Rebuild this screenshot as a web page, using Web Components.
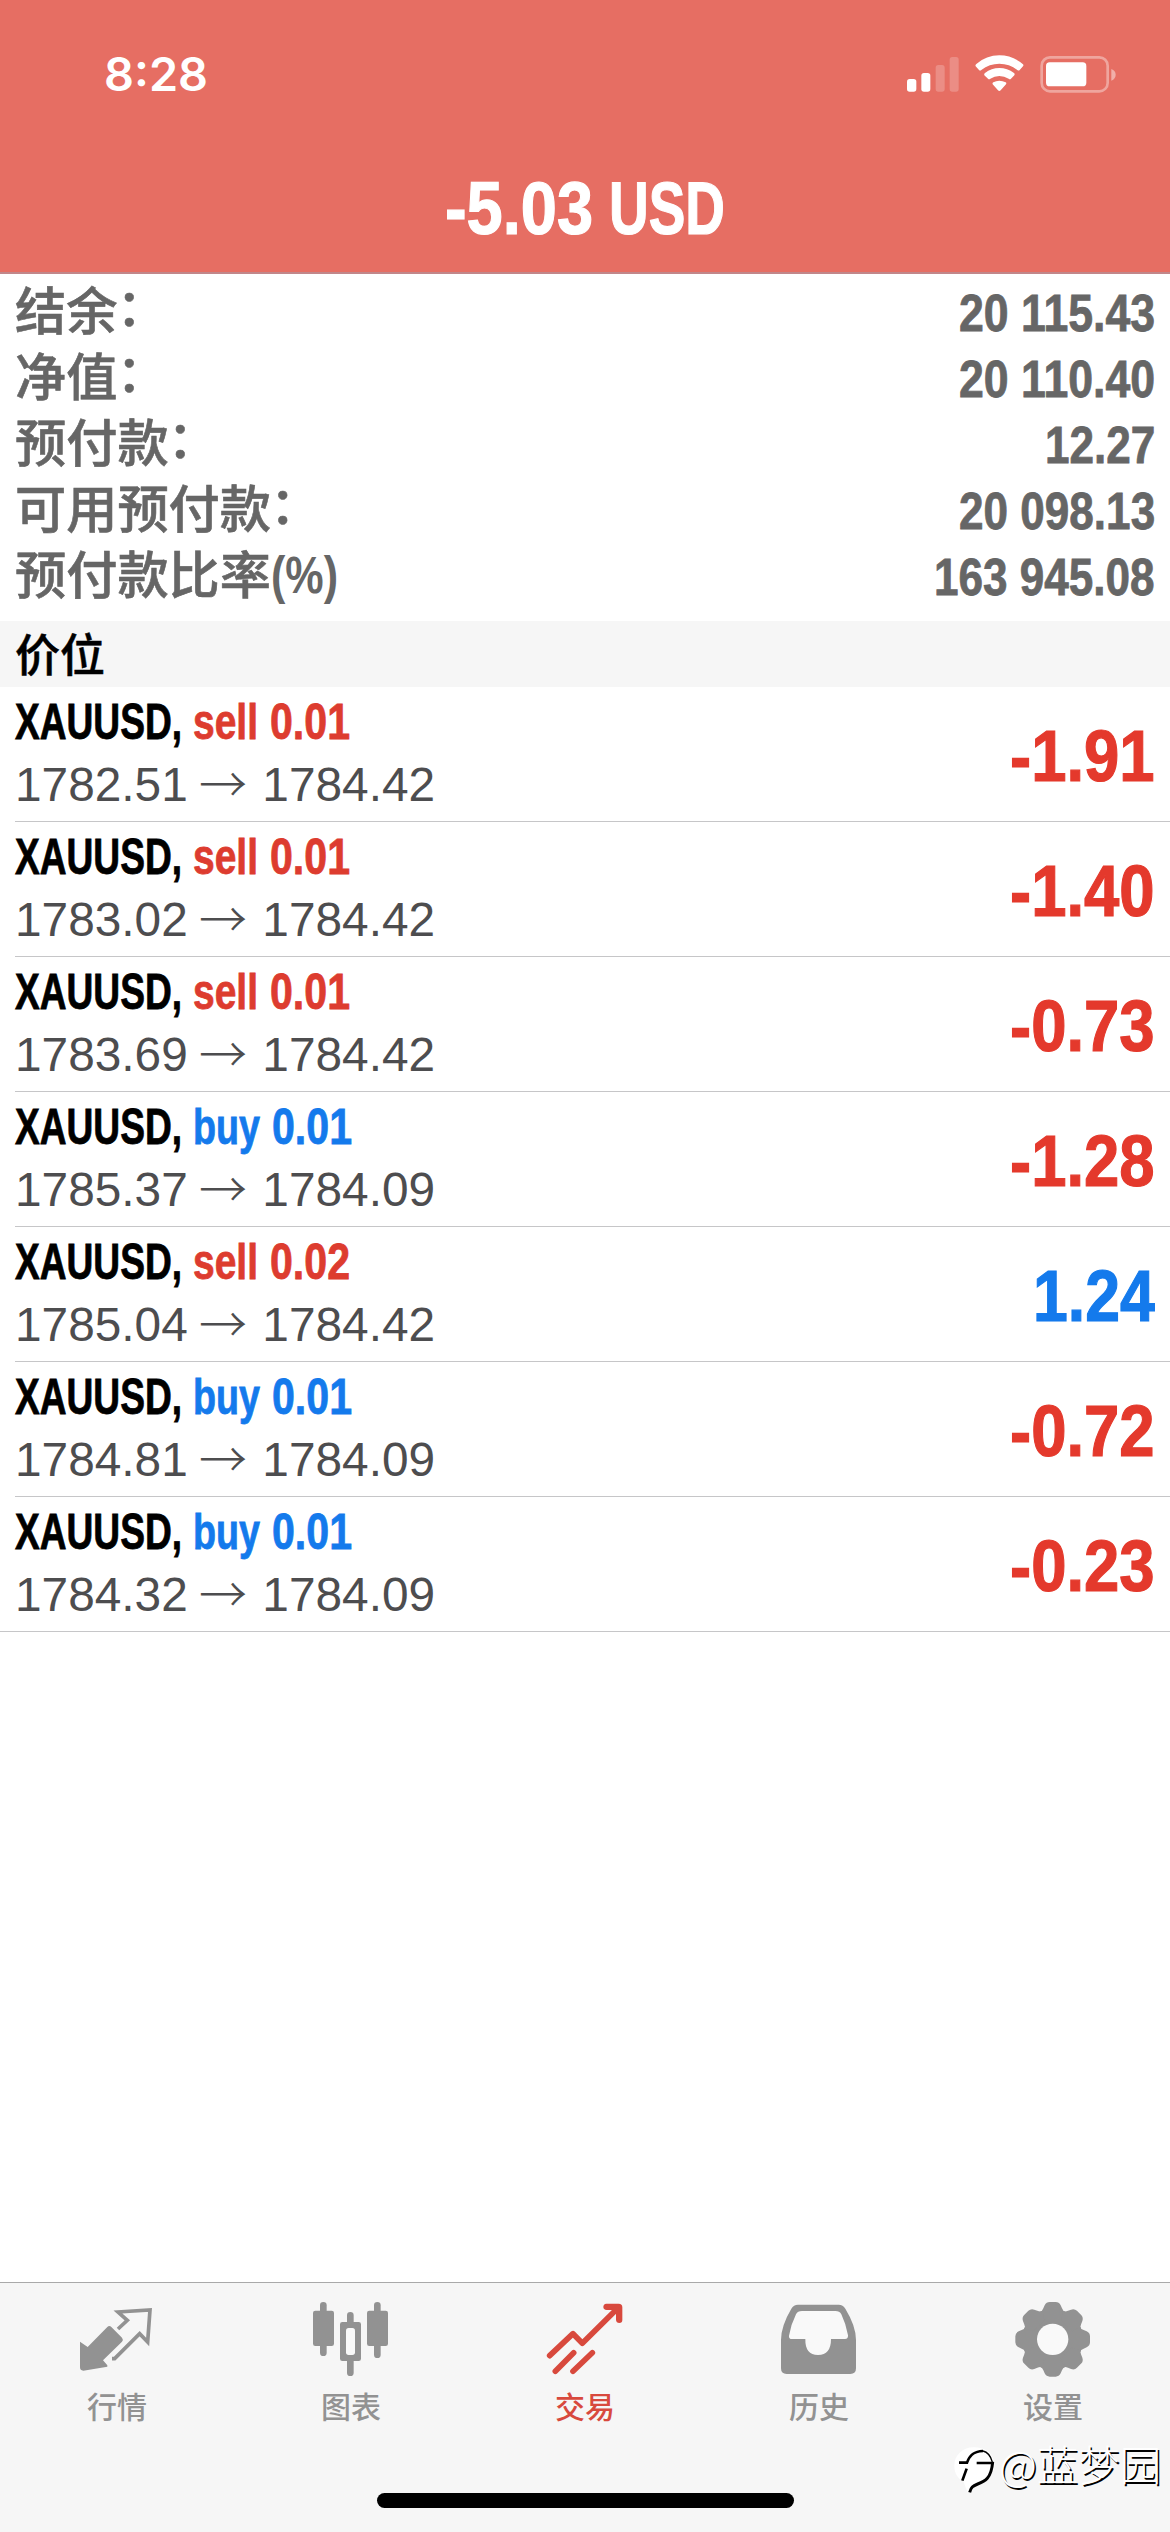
<!DOCTYPE html>
<html lang="zh-CN">
<head>
<meta charset="utf-8">
<meta name="viewport" content="width=device-width">
<title>交易</title>
<style>
html,body{margin:0;padding:0;background:#fff}
body{font-family:"Liberation Sans","Noto Sans CJK SC",sans-serif}
</style>
</head>
<body>
<trade-app></trade-app>
<script>
class Base extends HTMLElement{
  constructor(){super();this.attachShadow({mode:'open'})}
  connectedCallback(){this.shadowRoot.innerHTML=this.render();if(this.ready)this.ready()}
  a(n){return this.getAttribute(n)||''}
}

customElements.define('fit-text',class extends Base{
  render(){return `<style>:host{display:block;flex:none;white-space:pre;width:${this.a('w')}px}
    span{display:inline-block;transform-origin:0 50%}</style><span>${this.a('text')}</span>`}
  ready(){const s=this.shadowRoot.querySelector('span');
    s.style.transform=`scaleX(${+this.a('w')/s.getBoundingClientRect().width})`}
});

/* Advance width of a figure string: digits, and half-width marks. */
const figW=(t,d)=>[...t].reduce((n,c)=>n+(/\d/.test(c)?d:c==='-'?d*.66:d*.52),0);

customElements.define('status-bar',class extends Base{
  render(){return `<style>
    :host{display:flex;justify-content:space-between;align-items:center;height:50px;padding:48px 53px 0 104px;color:#fff}
    div{font:600 46px/50px Inter,sans-serif;padding-top:1px}
    svg{display:block;width:212px;height:40px}
  </style>
  <div><fit-text w="104" text="8:28"></fit-text></div>
  <svg viewBox="134 98 636 120">
    <g fill="#fff"><rect x="140" y="176" width="28" height="38" rx="8"/><rect x="183" y="158" width="27" height="56" rx="8"/>
    <rect x="226" y="134" width="27" height="80" rx="8" opacity=".22"/><rect x="268" y="110" width="27" height="104" rx="8" opacity=".22"/>
    <path d="M346 138Q344 134 348 131Q378 105 417 105Q456 105 487 131Q491 134 488 138L478 149Q475 152 471 149Q447 130 417 130Q387 130 363 149Q359 152 356 149Z"/>
    <path d="M372 165Q370 161 374 158Q393 143 417 143Q441 143 461 158Q465 161 462 165L452 175Q449 178 445 175Q432 167 417 167Q402 167 390 175Q386 178 383 175Z"/>
    <path d="M397 192Q395 188 399 186Q407 181 417 181Q427 181 436 186Q440 188 437 192L421 210Q417 214 413 210Z"/>
    <rect x="557" y="126" width="121" height="72" rx="11"/>
    <path d="M753 146Q766 151 766 163T753 181Z" opacity=".45"/></g>
    <rect x="544" y="111" width="198" height="102" rx="25" fill="none" stroke="#fff" stroke-opacity=".38" stroke-width="8"/>
  </svg>`}
});

customElements.define('nav-header',class extends Base{
  render(){return `<style>
    :host{display:flex;flex-direction:column;height:272px;background:#e66e63;border-bottom:2px solid #c1878a}
    .t{display:flex;justify-content:center;gap:16px;padding-top:69px;color:#fff;font:700 74px/84px "Liberation Sans",sans-serif;-webkit-text-stroke:1.2px #fff}
  </style><status-bar></status-bar>
  <div class="t"><fit-text w="148" text="-5.03"></fit-text><fit-text w="116" text="USD"></fit-text></div>`}
});

customElements.define('account-row',class extends Base{
  render(){const v=this.a('value');return `<style>
    :host{display:flex;justify-content:space-between;height:66px;padding:0 15px;color:#666}
    .l{display:flex;font:500 51.2px/68px "Liberation Sans","Noto Sans CJK SC",sans-serif;-webkit-text-stroke:.6px #666}
    .l i{font-style:normal;margin:-4px 0 0 -1px}
    .l fit-text{font-weight:700;margin-top:-1px;-webkit-text-stroke:0}
    .v{font:700 51px/69px "Liberation Sans",sans-serif;-webkit-text-stroke:.8px #666}
  </style><div class="l"><span>${this.a('label')}</span>${this.a('unit')?`<fit-text w="67" text="${this.a('unit')}"></fit-text>`:'<i>：</i>'}</div>
  <div class="v"><fit-text w="${figW(v,24.4)}" text="${v}"></fit-text></div>`}
});

customElements.define('section-title',class extends Base{
  render(){return `<style>:host{display:block;height:66px;padding-left:15px;background:#f6f6f6;color:#000;
    font:500 45px/63px "Noto Sans CJK SC",sans-serif;-webkit-text-stroke:.5px #000}</style><slot></slot>`}
});

customElements.define('position-row',class extends Base{
  render(){const s=this.a('side'),p=this.a('profit'),c=s==='buy'?'#147aec':'#dd3c2f',pc=p[0]==='-'?'#e4392c':'#147aec';
  return `<style>
    :host{display:flex;align-items:center;height:134px;margin-left:15px;padding-right:15px;border-bottom:1px solid #c6c6c8}
    :host([last]){margin-left:0;padding-left:15px}
    .m{flex:1;align-self:flex-start;padding-top:7px}
    .n{display:flex;font:700 50px/56px "Liberation Sans",sans-serif;color:#000;-webkit-text-stroke:.8px currentColor}
    .s{display:flex;gap:12px;margin-left:11px;color:${c}}
    .p{display:flex;font:400 47.8px/56px "Liberation Sans",sans-serif;color:#4d4d4f;padding-top:7px;white-space:pre}
    .p i{font:300 48px/48px "Noto Sans CJK SC",sans-serif;width:50px;margin-left:-2px}
    .v{font:700 73px/80px "Liberation Sans",sans-serif;color:${pc};padding-top:3px;-webkit-text-stroke:1.2px currentColor}
  </style>
  <div class="m"><div class="n"><fit-text w="167" text="XAUUSD,"></fit-text>
    <div class="s"><fit-text w="${s==='buy'?67:65}" text="${s}"></fit-text><fit-text w="80" text="${this.a('lots')}"></fit-text></div></div>
    <div class="p"><span>${this.a('open')} </span><i>→</i><span> ${this.a('now')}</span></div></div>
  <div class="v"><fit-text w="${figW(p,34.6)}" text="${p}"></fit-text></div>`}
});

const ICONS={
quotes:`<svg viewBox="231 120 240 240"><path fill="currentColor" d="M240 245L263 261L322 201Q328 195 334 201L366 233Q371 239 366 245L309 301L322 316V320L250 332Q240 332 240 322Z"/>
  <path fill="none" stroke="currentColor" stroke-width="11" d="M354 207L382 181L354 156L450 150L443 246L419 221L344 296H336"/></svg>`,
charts:`<svg viewBox="933 120 240 240"><g fill="currentColor"><rect x="960" y="126" width="20" height="162" rx="10"/><rect x="939" y="152" width="63" height="106" rx="7"/>
  <rect x="1122" y="126" width="20" height="168" rx="10"/><rect x="1101" y="152" width="63" height="106" rx="7"/>
  <path d="M1041 186V166Q1041 156 1051 156T1061 166V186H1076Q1083 186 1083 193V296Q1083 303 1076 303H1061V338Q1061 348 1051 348T1041 338V303H1027Q1020 303 1020 296V193Q1020 186 1027 186Z"/></g>
  <rect x="1038" y="204" width="27" height="81" rx="8" fill="#f9f9f9"/></svg>`,
trade:`<svg viewBox="195 120 240 240"><g fill="none" stroke="currentColor" stroke-width="17" stroke-linecap="round" stroke-linejoin="round">
  <path d="M209 287L279 221L307 250L410 148"/><path d="M226 334L281 278M279 334L337 278" stroke-linecap="round"/></g>
  <path fill="currentColor" d="M379 131H416Q427 131 427 142V180Q427 189 418 189Q409 189 408 180V160L398 150H380Q370 149 370 141Q370 132 379 131Z"/></svg>`,
history:`<svg viewBox="897 120 240 240"><path fill="currentColor" d="M954 134H1076Q1089 134 1096 146Q1128 198 1128 240V325Q1128 342 1111 342H920Q903 342 903 325V240Q903 198 934 146Q941 134 954 134Z"/>
  <path fill="#f9f9f9" d="M966 153H1066Q1079 153 1084 163Q1098 192 1104 226Q1105 237 1095 237H1053Q1053 285 1014 285T976 237H936Q926 237 927 227Q933 193 948 163Q953 153 966 153Z"/></svg>`,
settings:`<svg viewBox="339 120 240 240"><g fill="currentColor"><circle cx="458" cy="238" r="91"/>
  ${[0,45,90,135,180,225,270,315].map(r=>`<path transform="rotate(${r} 458 238)" d="M420 156Q427 154 430 145L434 136Q439 126 449 126H467Q477 126 482 136L486 145Q489 154 496 156L480 180H436Z"/>`).join('')}</g>
  <circle cx="458" cy="238" r="47" fill="#f9f9f9"/></svg>`
};

customElements.define('tab-item',class extends Base{
  render(){return `<style>
    :host{flex:1;display:flex;flex-direction:column;align-items:center;color:#929292}
    :host([active]){color:#d8493d}
    svg{display:block;width:80px;height:80px;margin-top:17px}
    span{font:500 30px/40px "Noto Sans CJK SC",sans-serif;margin-top:5px}
  </style>${ICONS[this.a('icon')]}<span><slot></slot></span>`}
});

customElements.define('tab-bar',class extends Base{
  render(){return `<style>
    :host{display:flex;flex-direction:column;align-items:center;height:249px;background:#f6f6f6;border-top:1px solid #a9a9a9}
    nav{display:flex;align-self:stretch;height:210px}
    .home{width:417px;height:15px;border-radius:8px;background:#000}
  </style><nav>
    <tab-item icon="quotes">行情</tab-item><tab-item icon="charts">图表</tab-item><tab-item icon="trade" active>交易</tab-item>
    <tab-item icon="history">历史</tab-item><tab-item icon="settings">设置</tab-item></nav><div class="home"></div>`}
});

customElements.define('author-mark',class extends Base{
  render(){return `<style>
    :host{position:absolute;left:954px;top:2439px;display:flex;align-items:flex-start;height:56px;color:#fff}
    svg{display:block;width:44px;height:56px}
    span{font:300 41.5px/48px "Noto Sans CJK SC",sans-serif;text-shadow:1.5px 1.5px 0 #000;white-space:nowrap;margin-left:1px}
  </style>
  <svg viewBox="162 537 132 168"><path fill="#fff" d="M222 562C188 562 163 585 163 618C163 641 174 656 190 664L203 698C230 672 284 660 284 613C280 578 255 562 222 562Z"/>
   <g fill="none" stroke="#000"><path stroke-width="8" d="M181 612V608H201C207 590 217 574 249 573M200 626L187 662M230 609H281"/><path stroke-width="9" d="M278 606C274 656 254 664 233 672C218 678 213 682 209 697"/><path stroke-width="4" d="M249 573C262 576 272 588 277 606"/></g></svg>
  <span>@蓝梦园</span>`}
});

customElements.define('trade-app',class extends Base{
  render(){
    const acc=[['结余','20 115.43'],['净值','20 110.40'],['预付款','12.27'],['可用预付款','20 098.13'],['预付款比率','163 945.08','(%)']];
    const pos=[['sell','0.01','1782.51','1784.42','-1.91'],['sell','0.01','1783.02','1784.42','-1.40'],['sell','0.01','1783.69','1784.42','-0.73'],
      ['buy','0.01','1785.37','1784.09','-1.28'],['sell','0.02','1785.04','1784.42','1.24'],['buy','0.01','1784.81','1784.09','-0.72'],['buy','0.01','1784.32','1784.09','-0.23']];
    return `<style>
      :host{display:flex;flex-direction:column;position:relative;width:1170px;height:2532px;overflow:hidden;background:#fff}
      .acc{padding:5px 0 12px}
      main{flex:1}
    </style><nav-header></nav-header>
    <main><div class="acc">${acc.map(r=>`<account-row label="${r[0]}" value="${r[1]}" unit="${r[2]||''}"></account-row>`).join('')}</div>
    <section-title>价位</section-title>
    ${pos.map((r,i)=>`<position-row ${i===6?'last':''} side="${r[0]}" lots="${r[1]}" open="${r[2]}" now="${r[3]}" profit="${r[4]}"></position-row>`).join('')}</main>
    <tab-bar></tab-bar><author-mark></author-mark>`}
});
</script>
</body>
</html>
